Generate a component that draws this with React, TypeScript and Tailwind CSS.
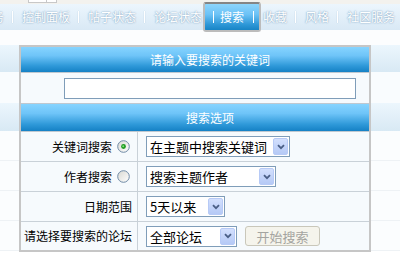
import React from "react";

const Sep = () => <span className="w-px h-[12px] bg-white ml-[8px] mr-[9px] shrink-0 shadow-[0_0_1px_#8fb0c9]" />;

const Arrow = () => (
  <span className="w-[15px] h-[17px] mr-[1px] shrink-0 rounded-[2px] border border-[#b7caf6] bg-[linear-gradient(to_bottom,#d3e0fd,#b5c9f6)] flex items-center justify-center">
    <svg width="8" height="6" viewBox="0 0 8 6">
      <path d="M1 1.2 L4 4.2 L7 1.2" stroke="#4a5f86" strokeWidth="1.8" fill="none" />
    </svg>
  </span>
);

const Select = ({ text, w }: { text: string; w: string }) => (
  <div className={`${w} h-[21px] border border-[#7f9db9] bg-white flex items-center justify-between`}>
    <span className="pl-[3px] text-[13px] text-black leading-none whitespace-nowrap">{text}</span>
    <Arrow />
  </div>
);

const Radio = ({ checked }: { checked: boolean }) => (
  <svg width="13" height="13" viewBox="0 0 13 13" className="ml-[5px] mr-[2px] shrink-0">
    <defs>
      <linearGradient id={checked ? "rg1" : "rg2"} x1="0" y1="0" x2="1" y2="1">
        <stop offset="0" stopColor="#d8d8d2" />
        <stop offset="1" stopColor="#ffffff" />
      </linearGradient>
    </defs>
    <circle cx="6.5" cy="6.5" r="5.8" fill={`url(#${checked ? "rg1" : "rg2"})`} stroke="#6f8aa6" strokeWidth="1" />
    {checked && (
      <>
        <circle cx="6.5" cy="6.5" r="2.4" fill="#1f9a1f" />
        <circle cx="6.2" cy="6.2" r="1" fill="#7fe07f" />
      </>
    )}
  </svg>
);

const Header = ({ text, h }: { text: string; h: string }) => (
  <div
    className={`${h} border-b border-[#bfc8d0] flex items-center justify-center pl-[30px] text-white text-[12px] bg-[linear-gradient(to_bottom,#86d4ff_0%,#6ec4f8_35%,#2f99d9_75%,#1581c5_100%)]`}
  >
    {text}
  </div>
);

const Row = ({ label, children, last }: { label: React.ReactNode; children: React.ReactNode; last?: boolean }) => (
  <div className={`grid grid-cols-[117px_1fr] ${last ? "h-[28px]" : "h-[30px] border-b border-[#c9d1d8]"}`}>
    <div className="border-r border-[#c9d1d8] flex items-center justify-end pr-[5px] text-[12px] text-black whitespace-nowrap">
      {label}
    </div>
    <div className="flex items-center pl-[8px] gap-[8px]">{children}</div>
  </div>
);

export default function App() {
  return (
    <div className="w-[400px] h-[264px] overflow-hidden bg-white font-['Noto_Sans_CJK_SC','Noto_Sans',sans-serif]">
      <div className="h-[4px] bg-[#f3f2ee] pl-[28px]">
        <div className="w-[29px] h-[3px] bg-white border-x border-b border-[#c8c8c8] flex">
          <div className="w-[18px] border-r border-[#c8c8c8]" />
        </div>
      </div>
      <div className="h-[26px] bg-[linear-gradient(to_bottom,#ecf6fd,#d9e9f5)] flex items-center text-white text-[12px] [text-shadow:0_0_2px_#7fa3c2,0_0_1px_#9cbad2]">
        <div className="flex items-center -ml-[8px] whitespace-nowrap">
          <span>务</span>
          <Sep />
          <span>控制面板</span>
          <Sep />
          <span>帖子状态</span>
          <Sep />
          <span>论坛状态</span>
          <div className="ml-[1px] w-[58px] h-[30px] rounded-[3px] border-2 border-[#bcbcbc] border-t-[#858585] bg-[linear-gradient(to_bottom,#8dd5fc_0%,#6cc2f6_40%,#2c96d6_80%,#1884c5_100%)] flex items-center pl-[8px] [text-shadow:none]">
            <span className="w-px h-[12px] bg-white mr-[6px]" />
            <span>搜索</span>
            <span className="w-px h-[12px] bg-white ml-[9px]" />
          </div>
          <span className="ml-[2px]">收藏</span>
          <Sep />
          <span>风格</span>
          <Sep />
          <span>社区服务</span>
        </div>
      </div>
      <div className="h-[15px] bg-[#fcfdfe]" />
      <div className="relative">
        <div className="h-[27px] bg-[linear-gradient(to_bottom,#ecf6fd,#d8e9f4)]" />
        <div className="h-[31px] bg-[#f9fcfe]" />
        <div className="h-[28px] bg-[linear-gradient(to_bottom,#ecf6fd,#d8e9f4)]" />
        <div className="h-[30px] bg-[#fbfdfe] border-b border-[#eef2f5]" />
        <div className="h-[30px] bg-[#fbfdfe] border-b border-[#eef2f5]" />
        <div className="h-[30px] bg-[#fbfdfe] border-b border-[#eef2f5]" />
        <div className="h-[30px] bg-[#fbfdfe] border-b border-[#eef2f5]" />

        <div className="absolute left-[19px] top-0 w-[352px] border-2 border-[#c6c6c6] bg-[#f6fafd]">
          <Header text="请输入要搜索的关键词" h="h-[26px]" />
          <div className="h-[31px] border-b border-[#bfc8d0] flex items-center">
            <div className="ml-[43px] w-[292px] h-[21px] border border-[#7f9db9] bg-white" />
          </div>
          <Header text="搜索选项" h="h-[28px]" />
          <Row
            label={
              <>
                <span>关键词搜索</span>
                <Radio checked />
              </>
            }
          >
            <Select text="在主题中搜索关键词" w="w-[144px]" />
          </Row>
          <Row
            label={
              <>
                <span>作者搜索</span>
                <Radio checked={false} />
              </>
            }
          >
            <Select text="搜索主题作者" w="w-[130px]" />
          </Row>
          <Row label={<span>日期范围</span>}>
            <Select text="5天以来" w="w-[79px]" />
          </Row>
          <Row label={<span>请选择要搜索的论坛</span>} last>
            <Select text="全部论坛" w="w-[91px]" />
            <button
              disabled
              className="w-[75px] h-[20px] rounded-[3px] border border-[#c9c7ba] bg-[#f5f4ec] text-[13px] text-[#a4a4a0] leading-none flex items-center justify-center"
            >
              开始搜索
            </button>
          </Row>
        </div>
      </div>
    </div>
  );
}
